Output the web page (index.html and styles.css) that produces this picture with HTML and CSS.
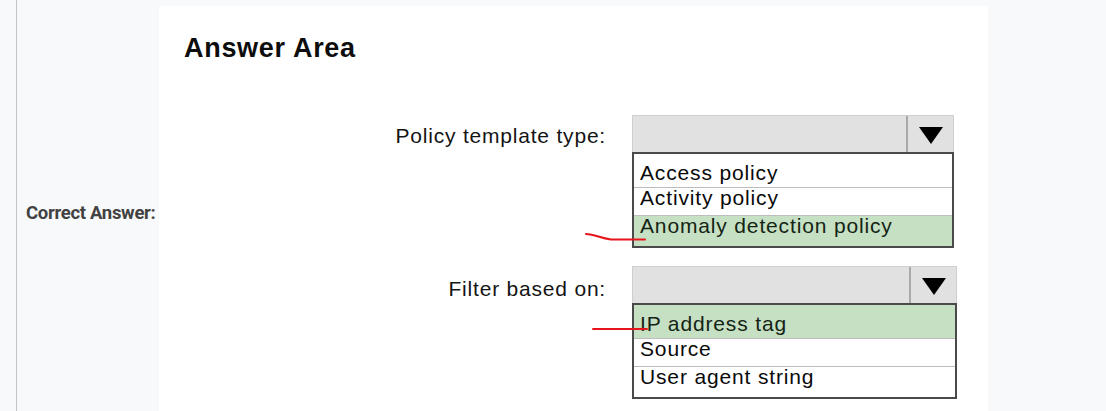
FILE: index.html
```html
<!DOCTYPE html>
<html lang="en">
<head>
<meta charset="utf-8">
<title>Correct Answer</title>
<link rel="stylesheet" href="styles.css">
</head>
<body>
<div class="row">
  <div class="label-cell">Correct Answer:</div>
  <div class="panel">
    <h2 class="title">Answer Area</h2>

    <div class="field">
      <span class="field-label">Policy template type:</span>
      <div class="dropdown">
        <div class="head">
          <div class="head-value"></div>
          <div class="head-arrow"><span class="tri"></span></div>
        </div>
        <ul class="list">
          <li class="opt">Access policy</li>
          <li class="opt">Activity policy</li>
          <li class="opt is-picked">Anomaly detection policy</li>
        </ul>
      </div>
    </div>

    <div class="field field-second">
      <span class="field-label">Filter based on:</span>
      <div class="dropdown dropdown-second">
        <div class="head">
          <div class="head-value"></div>
          <div class="head-arrow"><span class="tri"></span></div>
        </div>
        <ul class="list">
          <li class="opt is-picked">IP address tag</li>
          <li class="opt">Source</li>
          <li class="opt">User agent string</li>
        </ul>
      </div>
    </div>

    <svg class="marks" width="829" height="420" viewBox="0 0 829 420" aria-hidden="true">
      <path d="M427 228 C436 228.5, 441 232, 452 233.5 L486 233.5" fill="none" stroke="#e8141c" stroke-width="2" stroke-linecap="round"/>
      <path d="M434 323 L488 323" fill="none" stroke="#e8141c" stroke-width="2" stroke-linecap="round"/>
    </svg>
  </div>
</div>
</body>
</html>
```

FILE: styles.css
```css
html, body {
  margin: 0;
  padding: 0;
  overflow: hidden;
  background: #f8f9fa;
}

.row {
  display: flex;
  align-items: center;
  margin-left: 16px;
  border-left: 1px solid #c4c4c4;
  height: 426px;
}

.label-cell {
  width: 133px;
  padding-left: 9px;
  font-family: Roboto, "Liberation Sans", sans-serif;
  font-weight: 700;
  font-size: 18.5px;
  letter-spacing: -0.3px;
  color: #424242;
  white-space: nowrap;
}

.panel {
  position: relative;
  align-self: flex-start;
  margin-top: 6px;
  width: 829px;
  height: 420px;
  box-sizing: border-box;
  background: #ffffff;
  padding: 27px 0 0 25px;
  font-family: Arial, "Liberation Sans", sans-serif;
  color: #111;
}

.title {
  margin: 0;
  font-size: 27px;
  line-height: 31px;
  font-weight: 700;
  letter-spacing: 0.7px;
  color: #0d0d0d;
}

.field {
  display: flex;
  align-items: flex-start;
  gap: 26px;
  margin-top: 51px;
}

.field-second {
  margin-top: 18px;
}

.field-label {
  width: 422px;
  text-align: right;
  font-size: 21px;
  line-height: 24px;
  letter-spacing: 0.8px;
  padding-top: 9px;
  color: #141414;
}

.field-second .field-label {
  padding-top: 11px;
}

.dropdown {
  width: 322px;
}

.dropdown-second {
  width: 325px;
}

.head {
  display: flex;
  height: 37px;
  box-sizing: border-box;
  border: 1px solid #cfcfcf;
  border-bottom: none;
  background: #e1e1e1;
}

.head-value {
  flex: 1;
}

.head-arrow {
  width: 45px;
  border-left: 2px solid #a9a9a9;
  display: flex;
  align-items: center;
  justify-content: center;
}

.tri {
  width: 0;
  height: 0;
  border-left: 12px solid transparent;
  border-right: 12px solid transparent;
  border-top: 17px solid #000;
  margin-top: 2px;
}

.list {
  list-style: none;
  margin: 0;
  padding: 0;
  border: 2px solid #4a4a4a;
  background: #fff;
}

.opt {
  font-size: 21px;
  line-height: 20px;
  letter-spacing: 0.85px;
  padding: 0 6px 7px 6px;
  border-top: 1px solid #bdbdbd;
  color: #0a0a0a;
}

.opt:first-child {
  border-top: none;
  padding-top: 9px;
  padding-bottom: 4px;
}

.opt:last-child {
  padding-bottom: 10px;
}

.opt.is-picked {
  background: #c6e0c4;
  color: #142414;
}

.marks {
  position: absolute;
  left: 0;
  top: 0;
  pointer-events: none;
}
```
